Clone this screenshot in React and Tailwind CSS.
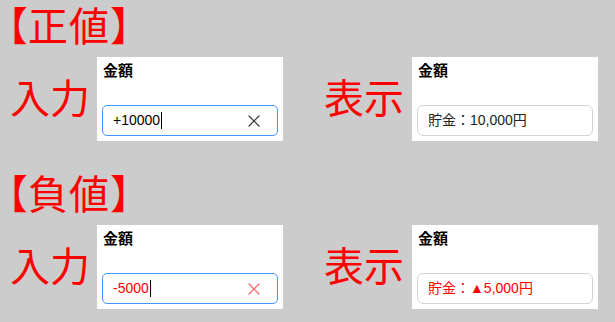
import React from 'react';

const FONT = '"Liberation Sans", "Noto Sans CJK JP", sans-serif';

const ClearIcon = ({ color }) => (
    <svg width="12" height="12" viewBox="0 0 12 12" fill="none">
        <path d="M1 1 L11 11 M11 1 L1 11" stroke={color} strokeWidth="1.2" strokeLinecap="round" />
    </svg>
);

const InputPanel = ({ value, negative }) => (
    <div className="w-[186px] bg-white px-[5px] pt-[4px] pb-[5px]">
        <div className="h-[20px] leading-[20px] text-[15px] font-bold text-black pl-[1px]">金額</div>
        <div className="mt-[24px] h-[31px] rounded-[5px] border border-[#4096ff] flex items-center pl-[10px] pr-[17px]">
            <span className={`text-[14px] ${negative ? 'text-[#ff0000]' : 'text-black'}`}>{value}</span>
            <span className="w-[1px] h-[17px] bg-black ml-[1px]" />
            <span className="ml-auto flex items-center">
                <ClearIcon color={negative ? '#ff5a5a' : '#333333'} />
            </span>
        </div>
    </div>
);

const DisplayPanel = ({ text, negative }) => (
    <div className="w-[186px] bg-white px-[5px] pt-[4px] pb-[5px]">
        <div className="h-[20px] leading-[20px] text-[15px] font-bold text-black pl-[1px]">金額</div>
        <div className="mt-[24px] h-[31px] rounded-[6px] border border-[#d4d4d4] flex items-center pl-[10px]">
            <span className={`text-[14px] ${negative ? 'text-[#ff0000]' : 'text-[#222222]'}`}>{text}</span>
        </div>
    </div>
);

const Section = ({ title, inputValue, displayText, negative }) => (
    <div className="h-[168px]">
        <div className="pt-[7px] pl-[8px] h-[47px] flex text-[40px] leading-[40px] text-[#ff0000]">
            <span className="[font-feature-settings:'halt']">【</span>
            <span className="tracking-[1px]">{title}</span>
            <span className="[font-feature-settings:'halt']">】</span>
        </div>
        <div className="mt-[10px] flex items-center">
            <div className="pl-[10px] w-[90px] text-[40px] leading-[40px] text-[#ff0000]">入力</div>
            <div className="ml-[7px]">
                <InputPanel value={inputValue} negative={negative} />
            </div>
            <div className="ml-[41px] w-[80px] text-[40px] leading-[40px] text-[#ff0000]">表示</div>
            <div className="ml-[8px]">
                <DisplayPanel text={displayText} negative={negative} />
            </div>
        </div>
    </div>
);

export default function App() {
    return (
        <div className="w-[615px] h-[322px] bg-[#cccccc] overflow-hidden" style={{ fontFamily: FONT }}>
            <Section title="正値" inputValue="+10000" displayText="貯金：10,000円" />
            <Section title="負値" inputValue="-5000" displayText="貯金：▲5,000円" negative />
        </div>
    );
}
